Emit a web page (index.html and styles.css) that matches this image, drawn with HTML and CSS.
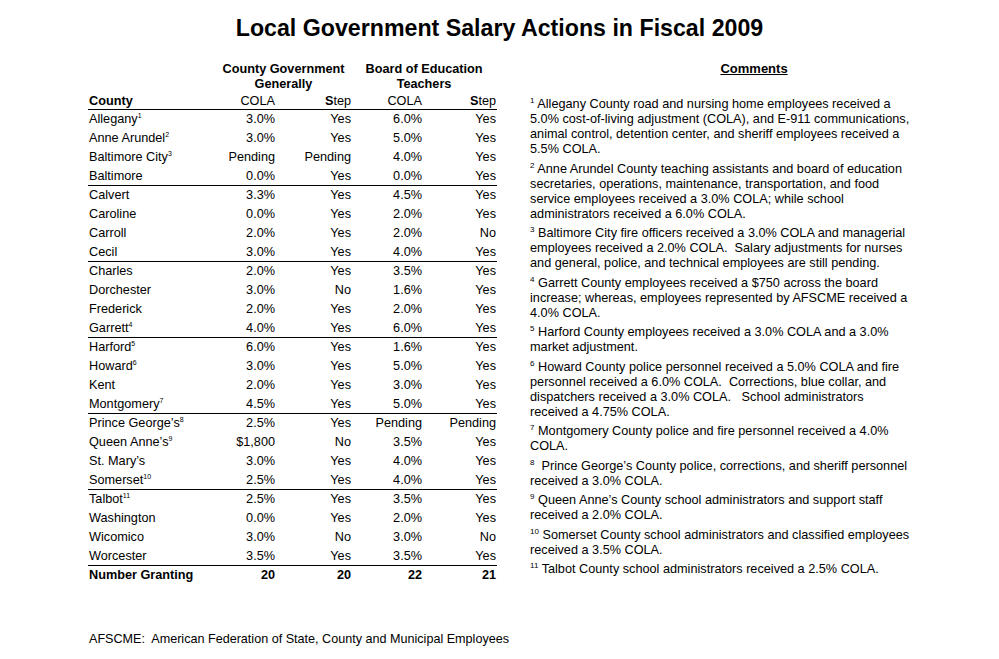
FILE: index.html
```html
<!DOCTYPE html>
<html>
<head>
<meta charset="utf-8">
<link rel="stylesheet" href="styles.css">
</head>
<body>
<div class="page">
  <h1 class="title">Local Government Salary Actions in Fiscal 2009</h1>
  <div class="content">
    <table class="salary">
      <colgroup>
        <col class="c-county"><col class="c-cola1"><col class="c-step1"><col class="c-cola2"><col class="c-step2">
      </colgroup>
      <thead>
        <tr class="group">
          <th></th>
          <th colspan="2" class="grp">County Government<br>Generally</th>
          <th colspan="2" class="grp">Board of Education<br>Teachers</th>
        </tr>
        <tr class="sub">
          <th class="left">County</th>
          <th>COLA</th>
          <th><b class="heavy">S</b>tep</th>
          <th>COLA</th>
          <th><b class="heavy">S</b>tep</th>
        </tr>
      </thead>
      <tbody>
        <tr><td class="left">Allegany<sup>1</sup></td><td>3.0%</td><td>Yes</td><td>6.0%</td><td>Yes</td></tr>
        <tr><td class="left">Anne Arundel<sup>2</sup></td><td>3.0%</td><td>Yes</td><td>5.0%</td><td>Yes</td></tr>
        <tr><td class="left">Baltimore City<sup>3</sup></td><td>Pending</td><td>Pending</td><td>4.0%</td><td>Yes</td></tr>
        <tr class="rule"><td class="left">Baltimore</td><td>0.0%</td><td>Yes</td><td>0.0%</td><td>Yes</td></tr>
        <tr><td class="left">Calvert</td><td>3.3%</td><td>Yes</td><td>4.5%</td><td>Yes</td></tr>
        <tr><td class="left">Caroline</td><td>0.0%</td><td>Yes</td><td>2.0%</td><td>Yes</td></tr>
        <tr><td class="left">Carroll</td><td>2.0%</td><td>Yes</td><td>2.0%</td><td>No</td></tr>
        <tr class="rule"><td class="left">Cecil</td><td>3.0%</td><td>Yes</td><td>4.0%</td><td>Yes</td></tr>
        <tr><td class="left">Charles</td><td>2.0%</td><td>Yes</td><td>3.5%</td><td>Yes</td></tr>
        <tr><td class="left">Dorchester</td><td>3.0%</td><td>No</td><td>1.6%</td><td>Yes</td></tr>
        <tr><td class="left">Frederick</td><td>2.0%</td><td>Yes</td><td>2.0%</td><td>Yes</td></tr>
        <tr class="rule"><td class="left">Garrett<sup>4</sup></td><td>4.0%</td><td>Yes</td><td>6.0%</td><td>Yes</td></tr>
        <tr><td class="left">Harford<sup>5</sup></td><td>6.0%</td><td>Yes</td><td>1.6%</td><td>Yes</td></tr>
        <tr><td class="left">Howard<sup>6</sup></td><td>3.0%</td><td>Yes</td><td>5.0%</td><td>Yes</td></tr>
        <tr><td class="left">Kent</td><td>2.0%</td><td>Yes</td><td>3.0%</td><td>Yes</td></tr>
        <tr class="rule"><td class="left">Montgomery<sup>7</sup></td><td>4.5%</td><td>Yes</td><td>5.0%</td><td>Yes</td></tr>
        <tr><td class="left">Prince George’s<sup>8</sup></td><td>2.5%</td><td>Yes</td><td>Pending</td><td>Pending</td></tr>
        <tr><td class="left">Queen Anne’s<sup>9</sup></td><td>$1,800</td><td>No</td><td>3.5%</td><td>Yes</td></tr>
        <tr><td class="left">St. Mary’s</td><td>3.0%</td><td>Yes</td><td>4.0%</td><td>Yes</td></tr>
        <tr class="rule"><td class="left">Somerset<sup>10</sup></td><td>2.5%</td><td>Yes</td><td>4.0%</td><td>Yes</td></tr>
        <tr><td class="left">Talbot<sup>11</sup></td><td>2.5%</td><td>Yes</td><td>3.5%</td><td>Yes</td></tr>
        <tr><td class="left">Washington</td><td>0.0%</td><td>Yes</td><td>2.0%</td><td>Yes</td></tr>
        <tr><td class="left">Wicomico</td><td>3.0%</td><td>No</td><td>3.0%</td><td>No</td></tr>
        <tr class="rule"><td class="left">Worcester</td><td>3.5%</td><td>Yes</td><td>3.5%</td><td>Yes</td></tr>
        <tr class="total"><td class="left">Number Granting</td><td>20</td><td>20</td><td>22</td><td>21</td></tr>
      </tbody>
    </table>
    <div class="comments">
      <h2 class="comments-title">Comments</h2>
      <p><sup>1</sup> Allegany County road and nursing home employees received a<br>5.0% cost-of-living adjustment (COLA), and E-911 communications,<br>animal control, detention center, and sheriff employees received a<br>5.5% COLA.</p>
      <p><sup>2</sup> Anne Arundel County teaching assistants and board of education<br>secretaries, operations, maintenance, transportation, and food<br>service employees received a 3.0% COLA; while school<br>administrators received a 6.0% COLA.</p>
      <p><sup>3</sup> Baltimore City fire officers received a 3.0% COLA and managerial<br>employees received a 2.0% COLA.&nbsp; Salary adjustments for nurses<br>and general, police, and technical employees are still pending.</p>
      <p><sup>4</sup> Garrett County employees received a $750 across the board<br>increase; whereas, employees represented by AFSCME received a<br>4.0% COLA.</p>
      <p><sup>5</sup> Harford County employees received a 3.0% COLA and a 3.0%<br>market adjustment.</p>
      <p><sup>6</sup> Howard County police personnel received a 5.0% COLA and fire<br>personnel received a 6.0% COLA.&nbsp; Corrections, blue collar, and<br>dispatchers received a 3.0% COLA.&nbsp;&nbsp; School administrators<br>received a 4.75% COLA.</p>
      <p><sup>7</sup> Montgomery County police and fire personnel received a 4.0%<br>COLA.</p>
      <p><sup>8</sup>&nbsp; Prince George’s County police, corrections, and sheriff personnel<br>received a 3.0% COLA.</p>
      <p><sup>9</sup> Queen Anne’s County school administrators and support staff<br>received a 2.0% COLA.</p>
      <p><sup>10</sup> Somerset County school administrators and classified employees<br>received a 3.5% COLA.</p>
      <p><sup>11</sup> Talbot County school administrators received a 2.5% COLA.</p>
    </div>
  </div>
  <p class="footer">AFSCME:&nbsp; American Federation of State, County and Municipal Employees</p>
</div>
</body>
</html>
```

FILE: styles.css
```css
html, body {
  margin: 0;
  padding: 0;
  background: #ffffff;
}

body {
  font-family: "Liberation Sans", Arial, sans-serif;
  color: #000000;
}

.page {
  width: 999px;
  height: 659px;
  overflow: hidden;
}

.title {
  margin: 0;
  padding-top: 14px;
  font-size: 23.2px;
  line-height: 28px;
  font-weight: bold;
  text-align: center;
}

.content {
  display: flex;
  align-items: flex-start;
  padding-left: 88px;
  margin-top: 19px;
}

.salary {
  border-collapse: collapse;
  font-size: 12.7px;
  table-layout: fixed;
  width: 409px;
}

.c-county { width: 128px; }
.c-cola1 { width: 60px; }
.c-step1 { width: 76px; }
.c-cola2 { width: 71px; }
.c-step2 { width: 74px; }

.salary th,
.salary td {
  padding: 0 1px 0 0;
  text-align: right;
  white-space: nowrap;
}

.salary .left {
  text-align: left;
  padding-left: 1px;
}

.salary th {
  font-weight: normal;
}

.group th.grp {
  font-weight: bold;
  text-align: center;
  line-height: 15px;
  height: 32px;
  vertical-align: top;
  padding-top: 1px;
}

.sub th {
  line-height: 15px;
  height: 14px;
  border-bottom: 1px solid #000;
  font-weight: normal;
}

.sub th.left {
  font-weight: bold;
}

.heavy {
  font-weight: bold;
}

.salary tbody td {
  height: 19px;
  line-height: 19px;
}

.salary tr.rule td {
  height: 18px;
  line-height: 18px;
  border-bottom: 1px solid #000;
}

.salary tr.total td {
  font-weight: bold;
  height: 19px;
}

sup {
  font-size: 7px;
  line-height: 0;
  vertical-align: 5px;
}

.comments {
  margin-left: 33px;
  width: 448px;
  font-size: 12.7px;
  line-height: 15px;
}

.comments-title {
  margin: 0 0 20px 0;
  font-size: 13px;
  line-height: 16px;
  font-weight: bold;
  text-decoration: underline;
  text-align: center;
}

.comments p {
  margin: 0 0 4.5px 0;
  white-space: nowrap;
}

.comments sup {
  font-size: 8px;
  vertical-align: 5px;
}

.footer {
  margin: 0;
  position: absolute;
  left: 89px;
  top: 631px;
  font-size: 12.6px;
  line-height: 16px;
}
```
